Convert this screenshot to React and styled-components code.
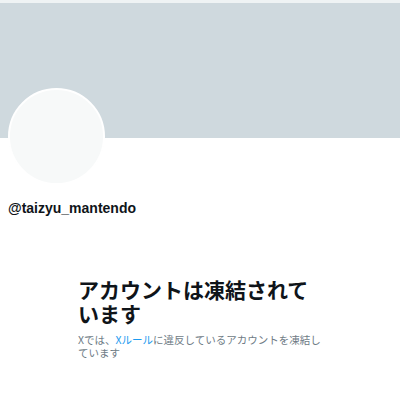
import React from 'react';
import styled, { createGlobalStyle } from 'styled-components';

const GlobalStyle = createGlobalStyle`
  body {
    margin: 0;
    background: #ffffff;
    font-family: "Liberation Sans", "Noto Sans CJK JP", sans-serif;
    color: #0f1419;
  }
`;

const Page = styled.div`
  width: 400px;
  height: 400px;
  overflow: hidden;
  border-top: 3px solid #eff3f4;
  box-sizing: border-box;
`;

const Banner = styled.div`
  height: 135px;
  background: #cfd9de;
`;

const ProfileHead = styled.div`
  padding: 0 8px;
  margin-top: -50px;
`;

const Avatar = styled.div`
  width: 93px;
  height: 93px;
  border-radius: 50%;
  background: #f7f9f9;
  border: 2px solid #ffffff;
`;

const Handle = styled.div`
  margin-top: 14px;
  font-family: "Liberation Sans", sans-serif;
  font-weight: 700;
  font-size: 14px;
  line-height: 18px;
`;

const Notice = styled.div`
  width: 244px;
  margin: 60px auto 0;
`;

const Title = styled.h2`
  margin: 0;
  font-family: "Noto Sans CJK JP", sans-serif;
  font-weight: 700;
  font-size: 21px;
  line-height: 24px;
  color: #0f1419;
`;

const Body = styled.p`
  margin: 8px 0 0;
  font-family: "Noto Sans CJK JP", sans-serif;
  font-size: 10.5px;
  line-height: 13px;
  color: #6e7b85;
`;

const RuleLink = styled.span`
  color: #1d9bf0;
`;

export default function App() {
  return (
    <>
      <GlobalStyle />
      <Page>
        <Banner />
        <ProfileHead>
          <Avatar />
          <Handle>@taizyu_mantendo</Handle>
        </ProfileHead>
        <Notice>
          <Title>アカウントは凍結されています</Title>
          <Body>
            Xでは、<RuleLink>Xルール</RuleLink>に違反しているアカウントを凍結しています
          </Body>
        </Notice>
      </Page>
    </>
  );
}
